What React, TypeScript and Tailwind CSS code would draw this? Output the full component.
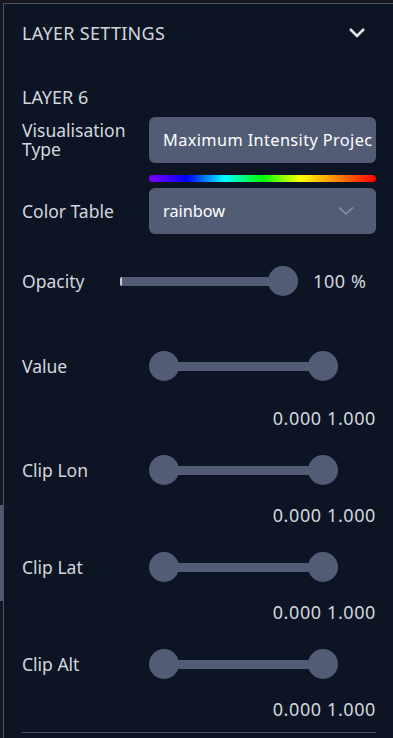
import React from "react";

const font = { fontFamily: '"Noto Sans", "Open Sans", sans-serif' };

const Thumb = () => (
  <div className="w-[30px] h-[30px] rounded-full bg-[#525d75] shrink-0" />
);

const RangeRow = ({ label, first }: { label: string; first?: boolean }) => (
  <div className="flex flex-col">
    <div className="flex items-center h-[30px]">
      <div className="w-[127px] text-[17.5px] text-[#d3d7de]">{label}</div>
      <div className="flex items-center w-[189px]">
        <Thumb />
        <div className="flex-1 h-[9px] bg-[#525d75] -mx-[2px]" />
        <Thumb />
      </div>
    </div>
    <div
      className={`flex justify-end text-[18px] tracking-[0.6px] text-[#d3d7de] leading-[20px] ${
        first ? "mt-[27px]" : "mt-[20px]"
      }`}
    >
      0.000 1.000
    </div>
  </div>
);

export default function App() {
  return (
    <div className="w-[393px] h-[738px] flex bg-[#16181e] pt-[3px] overflow-hidden" style={font}>
      <div className="w-[3px] relative shrink-0">
        <div className="absolute left-0 top-[502px] w-[3px] h-[96px] bg-[#4f5a70]" />
      </div>
      <div className="flex-1 min-w-0 bg-[#0d1424] border-l border-t border-[#4a5468] pl-[18px] pr-[17px] flex flex-col">
        <div className="flex items-center justify-between h-[24px] mt-[17px]">
          <div className="text-[18px] tracking-[0.3px] text-[#d3d7de]">LAYER SETTINGS</div>
          <svg width="18" height="12" viewBox="0 0 18 12" className="mr-[10px]">
            <path d="M2 2 L9 9 L16 2" stroke="#e5e7eb" strokeWidth="2.6" fill="none" />
          </svg>
        </div>
        <div className="mt-[42px] text-[18px] text-[#d3d7de] leading-[20px]">LAYER 6</div>
        <div className="flex items-center mt-[10px]">
          <div className="w-[127px] text-[17.5px] leading-[19px] text-[#d3d7de]">
            Visualisation
            <br />
            Type
          </div>
          <div className="flex-1 min-w-0 h-[46px] rounded-[6px] bg-[#525d75] flex items-center pl-[14px] pr-[4px] overflow-hidden">
            <span className="text-[16.3px] tracking-[0.4px] text-white whitespace-nowrap overflow-hidden">
              Maximum Intensity Projection
            </span>
          </div>
        </div>
        <div className="flex mt-[12px]">
          <div className="w-[127px]" />
          <div
            className="flex-1 h-[7px] rounded-full"
            style={{
              background:
                "linear-gradient(to right, #8000ff, #0000ff, #00ffff, #00ff00, #ffff00, #ff8000, #ff0000)",
            }}
          />
        </div>
        <div className="flex items-center mt-[6px]">
          <div className="w-[127px] text-[17.5px] text-[#d3d7de]">Color Table</div>
          <div className="flex-1 h-[46px] rounded-[6px] bg-[#525d75] flex items-center justify-between pl-[14px] pr-[22px]">
            <span className="text-[16.3px] text-white">rainbow</span>
            <svg width="16" height="10" viewBox="0 0 16 10">
              <path d="M1 1.5 L8 8 L15 1.5" stroke="#8a93a6" strokeWidth="1.6" fill="none" />
            </svg>
          </div>
        </div>
        <div className="flex items-center h-[30px] mt-[32px]">
          <div className="w-[98px] text-[17.5px] text-[#d3d7de]">Opacity</div>
          <div className="flex items-center w-[178px]">
            <div className="flex-1 h-[9px] bg-[#525d75] rounded-l-[2px] -mr-[2px] border-l-2 border-[#c9ced8]" />
            <Thumb />
          </div>
          <div className="ml-[15px] text-[18px] tracking-[0.6px] text-[#d3d7de]">100 %</div>
        </div>
        <div className="mt-[55px] flex flex-col gap-[27px]">
          <RangeRow label="Value" first />
          <RangeRow label="Clip Lon" />
          <RangeRow label="Clip Lat" />
          <RangeRow label="Clip Alt" />
        </div>
        <div className="mt-[13px] h-px bg-[#4a5468]" />
      </div>
    </div>
  );
}
